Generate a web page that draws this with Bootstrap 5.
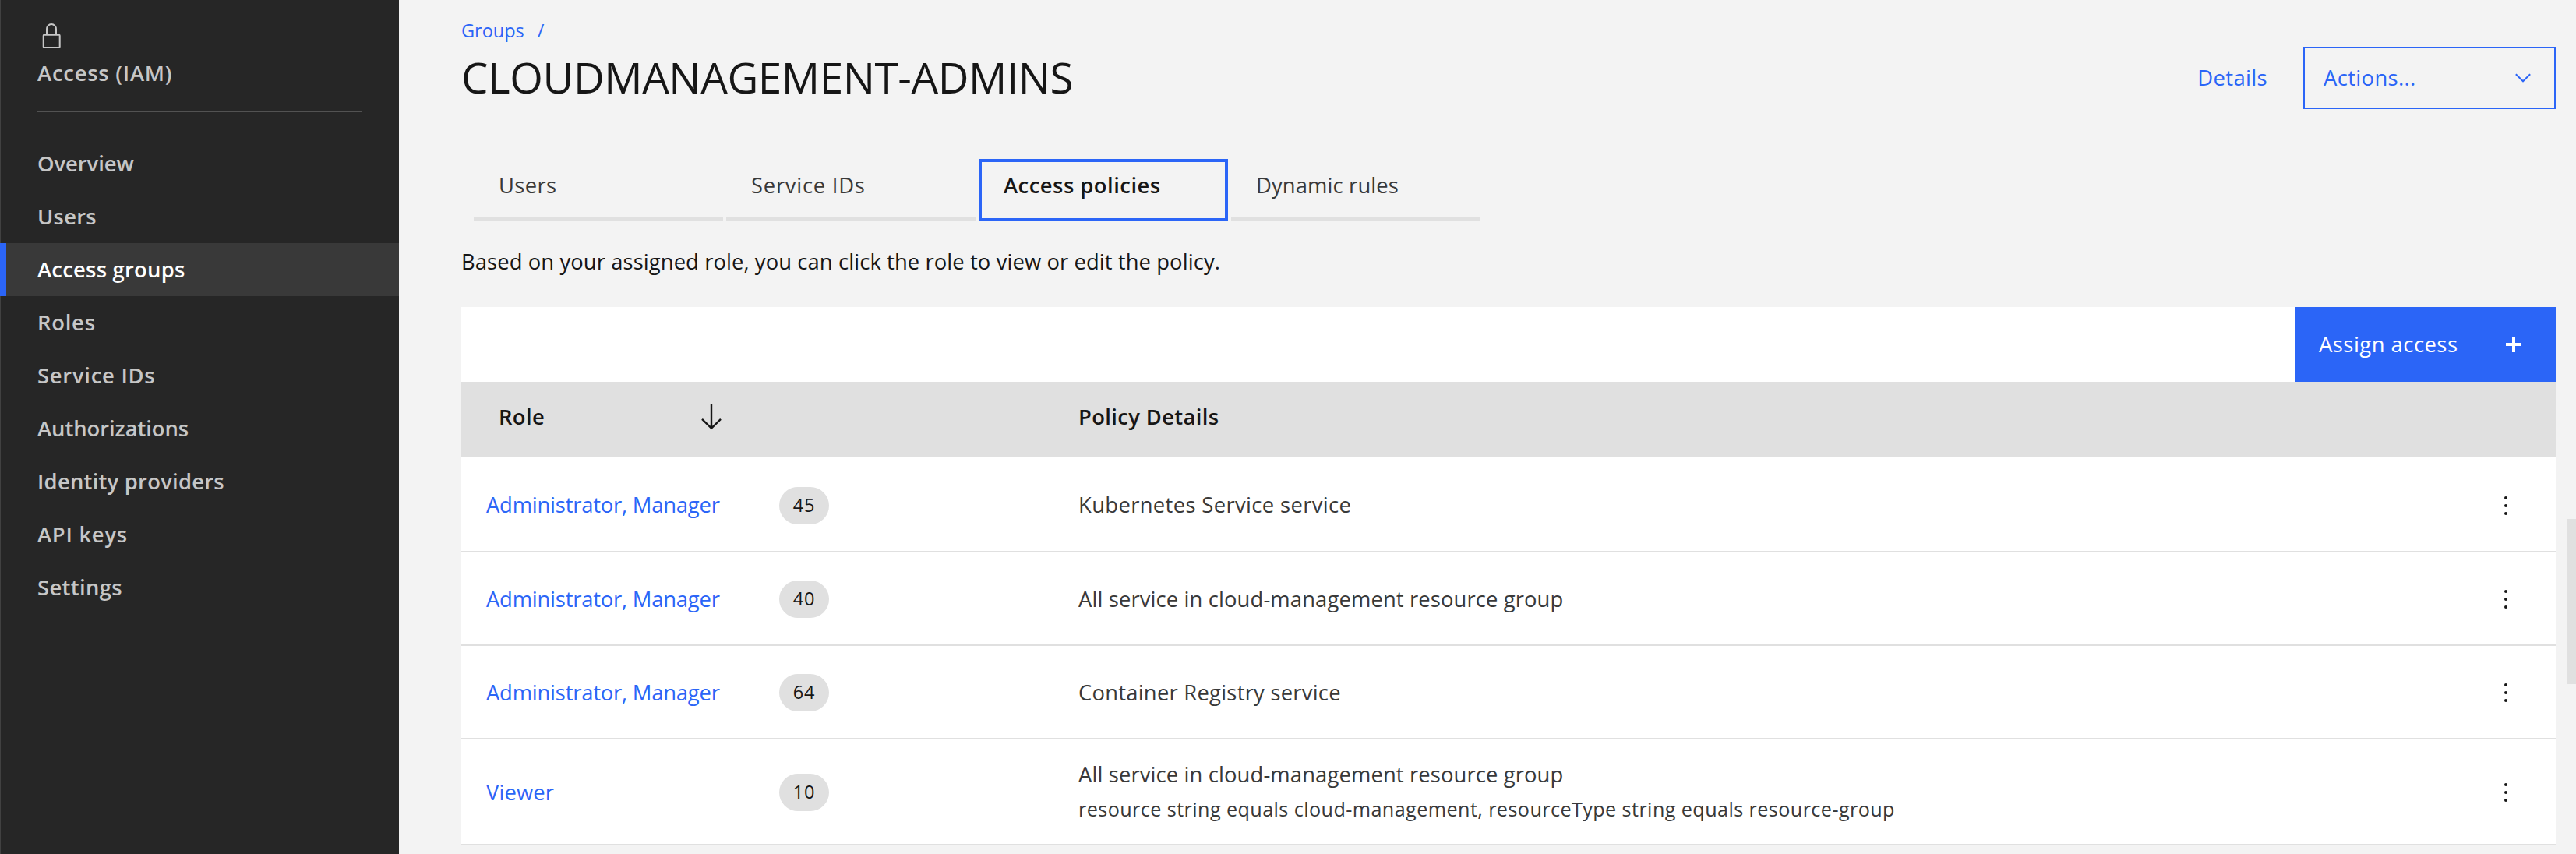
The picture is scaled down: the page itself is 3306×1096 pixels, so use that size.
<!DOCTYPE html>
<html lang="en">
<head>
<meta charset="utf-8">
<title>Access groups</title>
<link href="https://cdn.jsdelivr.net/npm/bootstrap@5.3.0/dist/css/bootstrap.min.css" rel="stylesheet">
<style>
  :root { --blue: #2b65f7; --line: #e0e0e0; --ink: #161616; --ink-2: #393939; }
  body { font-family: "Open Sans", sans-serif; font-size: 27.4px; line-height: 40px; background: #f3f3f3; color: var(--ink); height: 1096px; overflow: hidden; }
  a { color: var(--blue); text-decoration: none; }
  svg { display: block; flex: none; }

  .side { width: 512px; background: #262626; color: #c6c6c6; font-weight: 600; box-shadow: inset 1px 0 0 #414141; }
  .side-head { margin: 0 48px; padding-top: 30px; height: 144px; border-bottom: 2px solid #525252; }
  .side-head svg { margin-left: 6px; }
  .side-title { margin-top: 12px; letter-spacing: .78px; }
  .side .nav { margin-top: 32px; }
  .side .nav-link { height: 68px; line-height: 68px; padding: 0 0 0 48px; color: #c6c6c6; }
  .side .nav-link.active { background: #393939; color: #fff; box-shadow: inset 8px 0 0 var(--blue); }
  .ls-0 { letter-spacing: -.05px; }
  .ls-1 { letter-spacing: .12px; }
  .ls-2 { letter-spacing: .24px; }
  .ls-3 { letter-spacing: .36px; }
  .ls-4 { letter-spacing: .49px; }
  .ls-5 { letter-spacing: .75px; }
  .ls-n { letter-spacing: -.21px; }

  .main-area { padding: 0 26px 0 80px; }
  .page-head { height: 204px; }
  .crumbs { margin-top: 23px; font-size: 23.5px; line-height: 32px; color: var(--blue); }
  .crumbs span { margin-left: 17px; }
  .page-title { margin: 9px 0 0; font-size: 54.8px; line-height: 70px; font-weight: 400; letter-spacing: -.43px; }
  .head-actions { margin-top: 60px; height: 80px; }
  .details-link { margin-right: 46px; }
  .actions-btn { width: 324px; height: 80px; border: 2px solid var(--blue); border-radius: 0; color: var(--blue); font-size: 27.4px; line-height: 40px; padding: 0 30px 0 24px; }

  .tab-strip { margin-left: 16px; gap: 4px; }
  .tab-strip .nav-link { width: 320px; height: 80px; padding: 14px 0 0 32px; color: var(--ink-2); border-bottom: 6px solid var(--line); border-radius: 0; }
  .tab-strip .nav-link.active { border: 4px solid var(--blue); padding: 10px 0 0 28px; color: var(--ink); font-weight: 600; }
  .intro { margin: 32px 0 38px; letter-spacing: .09px; }

  .toolbar { height: 96px; }
  .assign-btn { width: 334px; border-radius: 0; border: 0; background: var(--blue); color: #fff; font-size: 27.4px; line-height: 40px; padding: 0 44px 0 30px; }
  .policies { table-layout: fixed; --bs-table-bg: #fff; margin: 0; color: var(--ink-2); }
  .policies th { height: 96px; padding: 0 0 6px; background: var(--line); border: 0; font-weight: 600; color: var(--ink); vertical-align: middle; }
  .policies td { height: 120px; padding: 2px 0 0; border-bottom: 2px solid var(--line); vertical-align: middle; }
  .policies tbody tr:first-child td { height: 122px; padding-top: 4px; }
  .policies tbody tr:last-child td { height: 136px; }
  .policies a, .detail { display: block; margin-top: -1px; }
  .policies a { padding-left: 32px; }
  .policies th:first-child { padding-left: 48px; }
  .detail-more { font-size: 25.2px; line-height: 44px; margin-top: 2px; letter-spacing: .41px; }
  .count { width: 64px; height: 48px; border-radius: 24px; background: var(--line); color: var(--ink); font-size: 23.5px; line-height: 46px; font-weight: 400; padding: 0; display: block; letter-spacing: .8px; }
  .scroll-thumb { right: 0; top: 666px; width: 12px; height: 212px; background: var(--line); }
</style>
<script src="https://cdn.jsdelivr.net/npm/bootstrap@5.3.0/dist/js/bootstrap.bundle.min.js"></script>
</head>
<body>
<div class="d-flex h-100">
  <aside class="side flex-shrink-0">
    <div class="side-head">
      <svg width="24" height="32" viewBox="0 0 24 32" fill="none" stroke="#c6c6c6" stroke-width="2"><path d="M6 14V7.5a6 6.5 0 0 1 12 0V14"/><rect x="1.7" y="14.7" width="21" height="16.3" rx="1"/></svg>
      <div class="side-title">Access (IAM)</div>
    </div>
    <nav class="nav flex-column">
      <a class="nav-link ls-0" href="#">Overview</a>
      <a class="nav-link ls-2" href="#">Users</a>
      <a class="nav-link active ls-2" href="#">Access groups</a>
      <a class="nav-link ls-5" href="#">Roles</a>
      <a class="nav-link ls-5" href="#">Service IDs</a>
      <a class="nav-link ls-0" href="#">Authorizations</a>
      <a class="nav-link ls-2" href="#">Identity providers</a>
      <a class="nav-link ls-5" href="#">API keys</a>
      <a class="nav-link ls-3" href="#">Settings</a>
    </nav>
  </aside>

  <main class="main-area flex-grow-1">
    <header class="page-head d-flex justify-content-between align-items-start">
      <div>
        <div class="crumbs"><a href="#">Groups</a><span>/</span></div>
        <h1 class="page-title">CLOUDMANAGEMENT-ADMINS</h1>
      </div>
      <div class="head-actions d-flex align-items-center">
        <a class="details-link ls-3" href="#">Details</a>
        <button class="btn actions-btn d-flex align-items-center justify-content-between" type="button">
          <span class="ls-3">Actions...</span>
          <svg width="20" height="12" viewBox="0 0 20 12" fill="none" stroke="currentColor" stroke-width="2"><path d="M.8 1.2 10 10.3l9.2-9.1"/></svg>
        </button>
      </div>
    </header>

    <nav class="nav tab-strip">
      <a class="nav-link ls-3" href="#">Users</a>
      <a class="nav-link ls-5" href="#">Service IDs</a>
      <a class="nav-link active ls-4" href="#">Access policies</a>
      <a class="nav-link ls-1" href="#">Dynamic rules</a>
    </nav>

    <p class="intro">Based on your assigned role, you can click the role to view or edit the policy.</p>

    <div class="toolbar d-flex justify-content-end bg-white">
      <button class="btn assign-btn d-flex align-items-center justify-content-between" type="button">
        <span class="ls-4">Assign access</span>
        <svg width="20" height="20" viewBox="0 0 20 20" fill="none" stroke="#fff" stroke-width="4"><path d="M10 0v20M0 10h20"/></svg>
      </button>
    </div>

    <table class="table policies">
      <colgroup><col width="408"><col width="384"><col><col width="128"></colgroup>
      <thead>
        <tr>
          <th>
            <div class="d-flex align-items-center justify-content-between">
              <span class="ls-3">Role</span>
              <svg class="me-5" width="52" height="34" viewBox="-3 0 52 34" fill="none" stroke="#161616" stroke-width="2.4"><path d="M10 0v32M-2 19.8l12 11.7 12-11.7"/></svg>
            </div>
          </th>
          <th></th>
          <th><span class="ls-3">Policy Details</span></th>
          <th></th>
        </tr>
      </thead>
      <tbody>
        <tr>
          <td><a class="ls-n" href="#">Administrator, Manager</a></td>
          <td><span class="badge count">45</span></td>
          <td><div class="detail ls-3">Kubernetes Service service</div></td>
          <td><svg class="mx-auto" width="4" height="24" viewBox="0 0 4 24" fill="#161616"><circle cx="2" cy="2" r="2"/><circle cx="2" cy="12" r="2"/><circle cx="2" cy="22" r="2"/></svg></td>
        </tr>
        <tr>
          <td><a class="ls-n" href="#">Administrator, Manager</a></td>
          <td><span class="badge count">40</span></td>
          <td><div class="detail ls-1">All service in cloud-management resource group</div></td>
          <td><svg class="mx-auto" width="4" height="24" viewBox="0 0 4 24" fill="#161616"><circle cx="2" cy="2" r="2"/><circle cx="2" cy="12" r="2"/><circle cx="2" cy="22" r="2"/></svg></td>
        </tr>
        <tr>
          <td><a class="ls-n" href="#">Administrator, Manager</a></td>
          <td><span class="badge count">64</span></td>
          <td><div class="detail ls-2">Container Registry service</div></td>
          <td><svg class="mx-auto" width="4" height="24" viewBox="0 0 4 24" fill="#161616"><circle cx="2" cy="2" r="2"/><circle cx="2" cy="12" r="2"/><circle cx="2" cy="22" r="2"/></svg></td>
        </tr>
        <tr>
          <td><a class="ls-1" href="#">Viewer</a></td>
          <td><span class="badge count">10</span></td>
          <td>
            <div class="detail ls-1">All service in cloud-management resource group</div>
            <div class="detail-more">resource string equals cloud-management, resourceType string equals resource-group</div>
          </td>
          <td><svg class="mx-auto" width="4" height="24" viewBox="0 0 4 24" fill="#161616"><circle cx="2" cy="2" r="2"/><circle cx="2" cy="12" r="2"/><circle cx="2" cy="22" r="2"/></svg></td>
        </tr>
      </tbody>
    </table>
  </main>
</div>
<div class="scroll-thumb position-absolute"></div>
</body>
</html>
